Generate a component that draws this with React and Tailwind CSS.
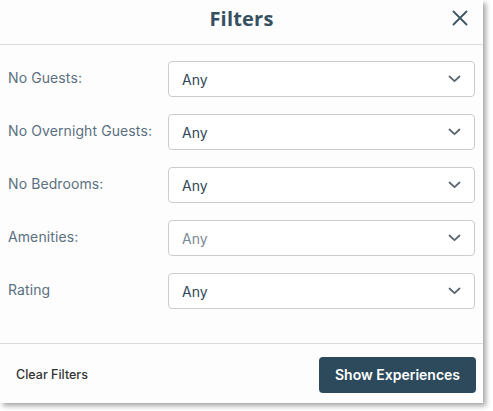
const filters = [
  { label: "No Guests:", value: "Any" },
  { label: "No Overnight Guests:", value: "Any" },
  { label: "No Bedrooms:", value: "Any" },
  { label: "Amenities:", value: "Any", placeholder: true },
  { label: "Rating", value: "Any" },
];

function SelectBox({ value, placeholder }) {
  return (
    <div className="h-[36px] flex items-center justify-between rounded-[4px] border border-[#c9cdd1] bg-white pl-[13px] pr-[12px]">
      <span className={`text-[14px] ${placeholder ? "text-[#7b8a94]" : "text-[#2f4858]"}`}>{value}</span>
      <svg width="13" height="8" viewBox="0 0 13 8" fill="none" className="mr-[1px]">
        <path d="M1.5 1.5 L6.5 6.2 L11.5 1.5" stroke="#5d6770" strokeWidth="1.8" strokeLinecap="round" strokeLinejoin="round" />
      </svg>
    </div>
  );
}

export default function App() {
  return (
    <div className="w-[493px] h-[411px] bg-white font-['Inter',sans-serif]">
      <div className="w-[483px] h-[403px] bg-[#fdfdfd] shadow-[3px_3px_5px_rgba(0,0,0,0.35)] flex flex-col">
        {/* header */}
        <div className="h-[45px] border-b border-[#dcdcdc] flex items-center justify-center relative">
          <h1 className="text-[20px] font-bold text-[#36505f] font-['Open_Sans',sans-serif] tracking-[0.2px] -mt-[7px]">Filters</h1>
          <button className="absolute right-[15px] top-[10px] text-[#36505f]">
            <svg width="16" height="16" viewBox="0 0 16 16" fill="none">
              <path d="M1.5 1.5 L14.5 14.5 M14.5 1.5 L1.5 14.5" stroke="#3b5563" strokeWidth="1.8" strokeLinecap="round" />
            </svg>
          </button>
        </div>

        {/* rows */}
        <div className="flex-1 flex flex-col gap-[17px] pt-[16px] pl-[8px] pr-[8px]">
          {filters.map((f) => (
            <div key={f.label} className="grid grid-cols-[160px_1fr] items-center">
              <span className="text-[14px] text-[#5b7080] pb-[4px] tracking-[0.1px]">{f.label}</span>
              <SelectBox value={f.value} placeholder={f.placeholder} />
            </div>
          ))}
        </div>

        {/* footer */}
        <div className="h-[60px] border-t border-[#dcdcdc] flex items-center justify-between pl-[16px] pr-[7px] pt-[2px]">
          <button className="text-[12.5px] font-medium text-[#333] pt-[2px]">Clear Filters</button>
          <button className="h-[36px] w-[157px] rounded-[4px] bg-[#2c4a5c] text-white text-[14px] font-semibold">Show Experiences</button>
        </div>
      </div>
    </div>
  );
}
